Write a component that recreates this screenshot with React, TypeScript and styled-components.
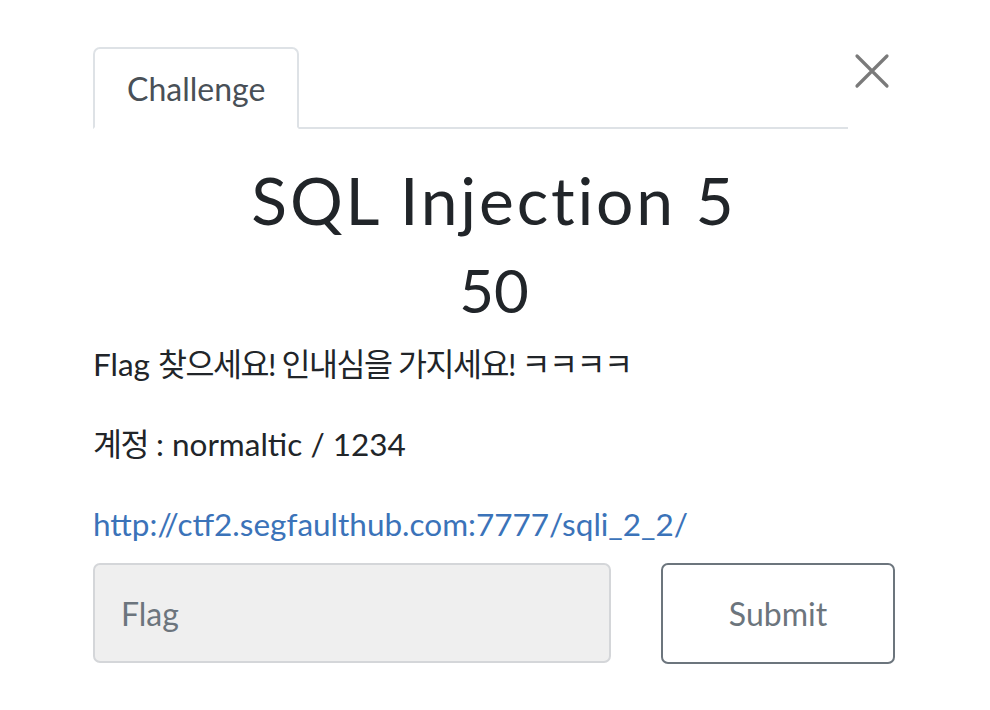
import React, { useState } from "react";
import styled, { createGlobalStyle } from "styled-components";

const GlobalStyle = createGlobalStyle`
  html, body {
    margin: 0;
    padding: 0;
    background: #ffffff;
  }
  body {
    font-family: "Lato", "Noto Sans CJK KR", sans-serif;
    color: #212529;
  }
`;

const Wrapper = styled.div`
  width: 802px;
  padding: 47px 0 0 93px;
`;

const Header = styled.div`
  display: flex;
  align-items: flex-start;
`;

const Nav = styled.ul`
  flex: 1;
  display: flex;
  margin: 0;
  padding: 0;
  list-style: none;
  border-bottom: 2px solid #dee2e6;
`;

const Tab = styled.li<{ $active?: boolean }>`
  height: 82px;
  box-sizing: border-box;
  padding: 0 32px;
  display: flex;
  align-items: center;
  margin-bottom: -2px;
  font-size: 32px;
  color: #495057;
  background: #fff;
  border: 2px solid ${(p) => (p.$active ? "#dee2e6" : "transparent")};
  border-bottom-color: ${(p) => (p.$active ? "#fff" : "transparent")};
  border-radius: 7px 7px 0 0;
`;

const Close = styled.button`
  width: 47px;
  height: 47px;
  margin-top: 6px;
  padding: 0;
  border: none;
  background: none;
  display: flex;
  justify-content: center;
  cursor: pointer;
`;

const Title = styled.h2`
  margin: 31px 0 0;
  text-align: center;
  font-size: 66px;
  font-weight: 400;
  line-height: 1.2;
  letter-spacing: 2.8px;
`;

const Points = styled.h3`
  margin: 15px 0 0;
  text-align: center;
  font-size: 60px;
  font-weight: 400;
  line-height: 1.2;
`;

const Description = styled.div`
  margin-top: 14px;
`;

const Para = styled.p`
  margin: 0 0 32px;
  font-size: 31.5px;
  line-height: 48px;
  &:last-child {
    margin-bottom: 15px;
  }
`;

const Korean = styled.span`
  letter-spacing: -1.5px;
`;

const Link = styled.a`
  color: #3b73b9;
  text-decoration: none;
`;

const Form = styled.form`
  display: flex;
  gap: 50px;
`;

const FlagInput = styled.input`
  width: 518px;
  height: 100px;
  box-sizing: border-box;
  padding: 0 26px;
  font-family: "Lato", sans-serif;
  font-size: 32px;
  color: #495057;
  background: #efefef;
  border: 2px solid #d4d6d9;
  border-radius: 7px;
  outline: none;
  &::placeholder {
    color: #6c757d;
  }
`;

const SubmitButton = styled.button`
  width: 234px;
  height: 101px;
  box-sizing: border-box;
  font-family: "Lato", sans-serif;
  font-size: 32px;
  color: #6c757d;
  background: #fff;
  border: 2px solid #6c757d;
  border-radius: 7px;
  cursor: pointer;
`;

function App() {
  const [flag, setFlag] = useState("");

  return (
    <Wrapper>
      <GlobalStyle />
      <Header>
        <Nav>
          <Tab $active>Challenge</Tab>
        </Nav>
        <Close aria-label="Close">
          <svg width="36" height="36" viewBox="0 0 36 36">
            <path
              d="M3 3 L33 33 M33 3 L3 33"
              stroke="#7a7a7a"
              strokeWidth="3.2"
              strokeLinecap="round"
            />
          </svg>
        </Close>
      </Header>
      <Title>SQL Injection 5</Title>
      <Points>50</Points>
      <Description>
        <Para>
          Flag <Korean>찾으세요! 인내심을 가지세요! ㅋㅋㅋㅋ</Korean>
        </Para>
        <Para>
          <Korean>계정</Korean> : normaltic / 1234
        </Para>
        <Para>
          <Link href="#">http://ctf2.segfaulthub.com:7777/sqli_2_2/</Link>
        </Para>
      </Description>
      <Form onSubmit={(e) => e.preventDefault()}>
        <FlagInput
          placeholder="Flag"
          value={flag}
          onChange={(e) => setFlag(e.target.value)}
        />
        <SubmitButton type="submit">Submit</SubmitButton>
      </Form>
    </Wrapper>
  );
}

export default App;
